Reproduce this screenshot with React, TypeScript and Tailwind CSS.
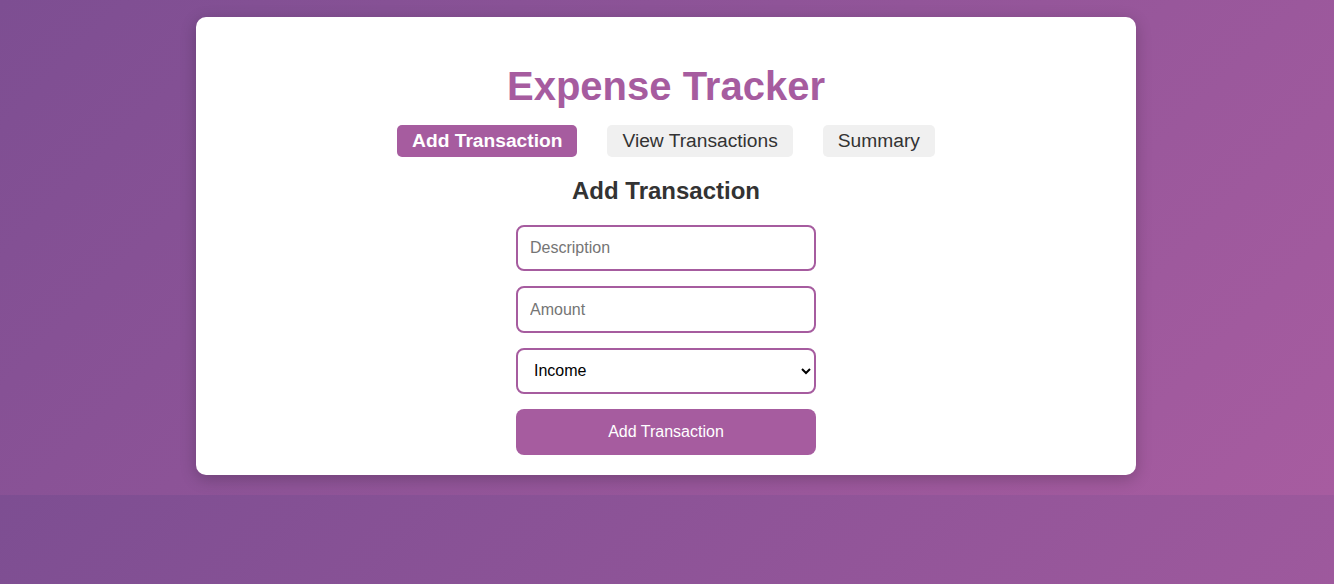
import React from "react";

export default function App() {
  const font = { fontFamily: '"Liberation Sans", Arial, sans-serif' };
  return (
    <div
      className="w-full h-[584px] bg-[linear-gradient(135deg,#7d4e92,#a75ca0)] bg-[length:100%_495px] bg-repeat"
      style={font}
    >
      <div className="pt-[17px] pr-[2px] flex justify-center">
        <div className="w-[940px] bg-white rounded-[10px] shadow-[0_4px_16px_rgba(0,0,0,0.22)] px-[20px] pt-[20px] pb-[20px] flex flex-col items-center">
          <h1 className="mt-[26px] text-[40px] leading-[46px] font-bold text-[#a65c9f]">
            Expense Tracker
          </h1>
          <div className="mt-[16px] flex gap-[30px]">
            <button className="h-[32px] px-[15px] rounded-[5px] bg-[#a65c9f] text-white font-bold text-[19.2px] leading-[32px]">
              Add Transaction
            </button>
            <button className="h-[32px] px-[15px] rounded-[5px] bg-[#f0f0f0] text-[#333] text-[19.2px] leading-[32px]">
              View Transactions
            </button>
            <button className="h-[32px] px-[15px] rounded-[5px] bg-[#f0f0f0] text-[#333] text-[19.2px] leading-[32px]">
              Summary
            </button>
          </div>
          <h2 className="mt-[20px] text-[24px] leading-[28px] font-bold text-[#333]">
            Add Transaction
          </h2>
          <div className="mt-[20px] w-[300px] flex flex-col gap-[15px]">
            <input
              type="text"
              placeholder="Description"
              className="h-[46.4px] w-full border-2 border-[#a65c9f] rounded-[8px] px-[12px] text-[16px] text-black placeholder:text-[#757575] outline-none"
              style={font}
            />
            <input
              type="number"
              placeholder="Amount"
              className="h-[46.4px] w-full border-2 border-[#a65c9f] rounded-[8px] px-[12px] text-[16px] text-black placeholder:text-[#757575] outline-none"
              style={font}
            />
            <select
              className="h-[46.4px] w-full border-2 border-[#a65c9f] rounded-[8px] px-[12px] text-[16px] text-black bg-white outline-none"
              style={font}
              defaultValue="income"
            >
              <option value="income">Income</option>
              <option value="expense">Expense</option>
            </select>
            <button className="h-[46px] w-full rounded-[8px] bg-[#a65c9f] text-white text-[16px]">
              Add Transaction
            </button>
          </div>
        </div>
      </div>
    </div>
  );
}
